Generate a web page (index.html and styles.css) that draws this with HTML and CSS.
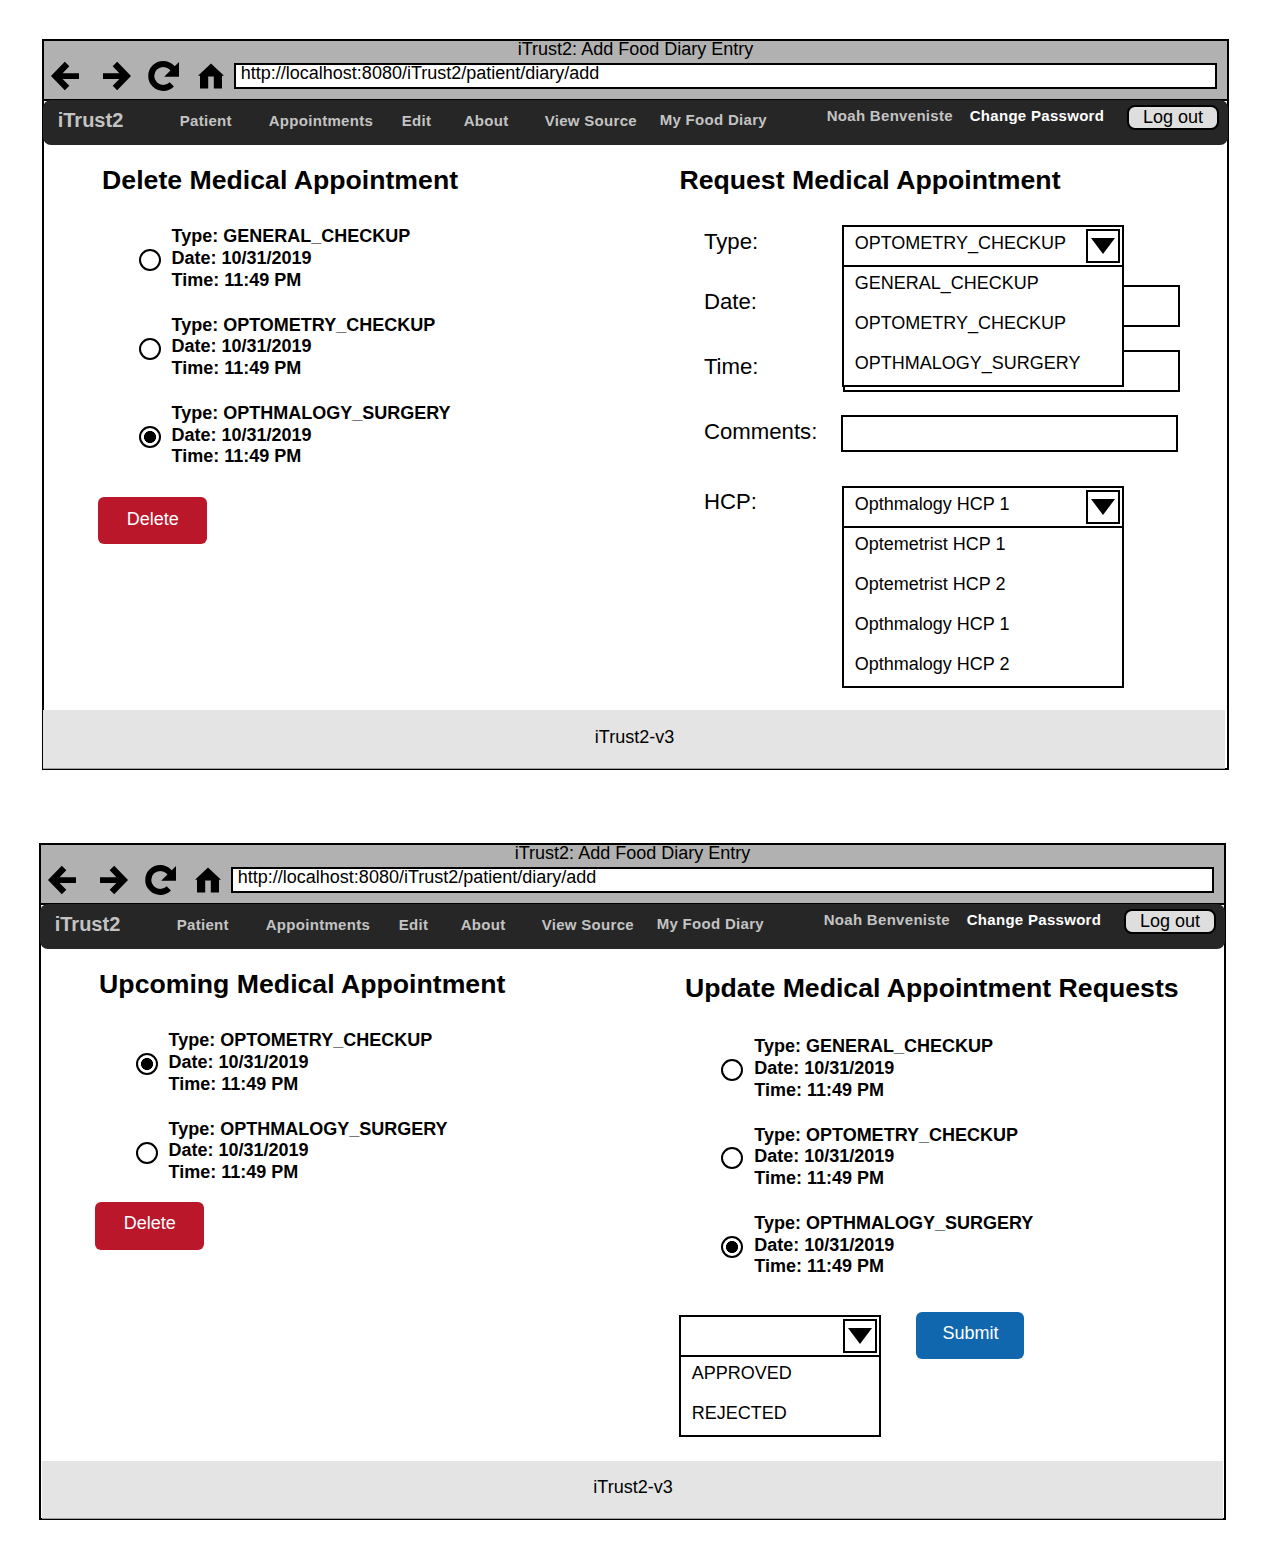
FILE: index.html
```html
<!DOCTYPE html>
<html lang="en">
<head>
<meta charset="utf-8">
<title>iTrust2: Add Food Diary Entry</title>
<link rel="stylesheet" href="styles.css">
</head>
<body>
<svg class="sprite" aria-hidden="true">
  <symbol id="i-back" viewBox="0 0 32 32"><path d="M2 16 15.8 1.8 20.3 6.3 13.6 13.2H30V19H13.6L20.3 25.7 15.8 30.2Z"/></symbol>
  <symbol id="i-forward" viewBox="0 0 32 32"><path d="M30 16 16.2 1.8 11.7 6.3 18.4 13.2H2V19H18.4L11.7 25.7 16.2 30.2Z"/></symbol>
  <symbol id="i-reload" viewBox="0 0 32 32"><path d="M23.8 24.3A12 12 0 1 1 23.8 7.5L26 10" fill="none" stroke="#000" stroke-width="6"/><path d="M31 2V16.7H16.2Z"/></symbol>
  <symbol id="i-home" viewBox="0 0 32 32"><path d="M16 3.4 29 15.7H27V28.6H18.8V16.4H13.2V28.6H5V15.7H3Z"/></symbol>
  <symbol id="i-caret" viewBox="0 0 24 16"><path d="M0 0H24L12 16Z"/></symbol>
</svg>

<section class="window window-request">
  <header class="chrome">
    <div class="chrome-title">iTrust2: Add Food Diary Entry</div>
    <div class="toolbar">
      <svg class="tool"><use href="#i-back"/></svg>
      <svg class="tool tool-forward"><use href="#i-forward"/></svg>
      <svg class="tool"><use href="#i-reload"/></svg>
      <svg class="tool"><use href="#i-home"/></svg>
      <div class="url">http://localhost:8080/iTrust2/patient/diary/add</div>
    </div>
  </header>
  <nav class="nav">
    <span class="brand">iTrust2</span>
    <span>Patient</span>
    <span>Appointments</span>
    <span>Edit</span>
    <span>About</span>
    <span>View Source</span>
    <span class="nav-diary">My Food Diary</span>
    <span class="nav-user">Noah Benveniste</span>
    <span class="nav-user nav-password">Change Password</span>
    <button class="logout">Log out</button>
  </nav>
  <main class="content">
    <div class="col-left">
      <h2>Delete Medical Appointment</h2>
      <div class="appointments">
        <div class="appointment"><i class="radio"></i><p>Type: GENERAL_CHECKUP<br>Date: 10/31/2019<br>Time: 11:49 PM</p></div>
        <div class="appointment"><i class="radio"></i><p>Type: OPTOMETRY_CHECKUP<br>Date: 10/31/2019<br>Time: 11:49 PM</p></div>
        <div class="appointment"><i class="radio checked"></i><p>Type: OPTHMALOGY_SURGERY<br>Date: 10/31/2019<br>Time: 11:49 PM</p></div>
      </div>
      <button class="btn btn-delete">Delete</button>
    </div>
    <div class="col-right">
      <h2>Request Medical Appointment</h2>
      <div class="form">
        <label>Type:</label>
        <div class="select select-over">
          <div class="select-head"><span>OPTOMETRY_CHECKUP</span><b class="arrow"><svg><use href="#i-caret"/></svg></b></div>
          <div class="option">GENERAL_CHECKUP</div>
          <div class="option">OPTOMETRY_CHECKUP</div>
          <div class="option">OPTHMALOGY_SURGERY</div>
        </div>
        <label>Date:</label>
        <div class="input"></div>
        <label>Time:</label>
        <div class="input"></div>
        <label>Comments:</label>
        <div class="input input-comments"></div>
        <label>HCP:</label>
        <div class="select">
          <div class="select-head"><span>Opthmalogy HCP 1</span><b class="arrow"><svg><use href="#i-caret"/></svg></b></div>
          <div class="option">Optemetrist HCP 1</div>
          <div class="option">Optemetrist HCP 2</div>
          <div class="option">Opthmalogy HCP 1</div>
          <div class="option">Opthmalogy HCP 2</div>
        </div>
      </div>
    </div>
  </main>
  <footer class="footer">iTrust2-v3</footer>
</section>

<section class="window window-update">
  <header class="chrome">
    <div class="chrome-title">iTrust2: Add Food Diary Entry</div>
    <div class="toolbar">
      <svg class="tool"><use href="#i-back"/></svg>
      <svg class="tool tool-forward"><use href="#i-forward"/></svg>
      <svg class="tool"><use href="#i-reload"/></svg>
      <svg class="tool"><use href="#i-home"/></svg>
      <div class="url">http://localhost:8080/iTrust2/patient/diary/add</div>
    </div>
  </header>
  <nav class="nav">
    <span class="brand">iTrust2</span>
    <span>Patient</span>
    <span>Appointments</span>
    <span>Edit</span>
    <span>About</span>
    <span>View Source</span>
    <span class="nav-diary">My Food Diary</span>
    <span class="nav-user">Noah Benveniste</span>
    <span class="nav-user nav-password">Change Password</span>
    <button class="logout">Log out</button>
  </nav>
  <main class="content">
    <div class="col-left">
      <h2>Upcoming Medical Appointment</h2>
      <div class="appointments">
        <div class="appointment"><i class="radio checked"></i><p>Type: OPTOMETRY_CHECKUP<br>Date: 10/31/2019<br>Time: 11:49 PM</p></div>
        <div class="appointment"><i class="radio"></i><p>Type: OPTHMALOGY_SURGERY<br>Date: 10/31/2019<br>Time: 11:49 PM</p></div>
      </div>
      <button class="btn btn-delete">Delete</button>
    </div>
    <div class="col-right">
      <h2>Update Medical Appointment Requests</h2>
      <div class="appointments">
        <div class="appointment"><i class="radio"></i><p>Type: GENERAL_CHECKUP<br>Date: 10/31/2019<br>Time: 11:49 PM</p></div>
        <div class="appointment"><i class="radio"></i><p>Type: OPTOMETRY_CHECKUP<br>Date: 10/31/2019<br>Time: 11:49 PM</p></div>
        <div class="appointment"><i class="radio checked"></i><p>Type: OPTHMALOGY_SURGERY<br>Date: 10/31/2019<br>Time: 11:49 PM</p></div>
      </div>
      <div class="actions">
        <div class="select select-status">
          <div class="select-head"><span></span><b class="arrow"><svg><use href="#i-caret"/></svg></b></div>
          <div class="option">APPROVED</div>
          <div class="option">REJECTED</div>
        </div>
        <button class="btn btn-submit">Submit</button>
      </div>
    </div>
  </main>
  <footer class="footer">iTrust2-v3</footer>
</section>
</body>
</html>
```
FILE: styles.css
```css
* { box-sizing: border-box; }

body {
  margin: 0;
  padding: 39px 0 40px;
  width: 1268px;
  height: 1560px;
  background: #fff;
  color: #000;
  font: 18px/18px "Liberation Sans", Arial, sans-serif;
}

.sprite { display: none; }

.window {
  display: flex;
  flex-direction: column;
  width: 1187px;
  border: 2px solid #000;
}
.window-request { height: 731px; margin-left: 42px; }
.window-update { height: 677px; margin: 73px 0 0 39px; }

/* Browser chrome */
.chrome {
  flex: none;
  height: 60px;
  background: #b1b1b1;
  border-bottom: 2px solid #000;
}
.chrome-title { height: 18px; line-height: 16px; text-align: center; }
.toolbar {
  display: flex;
  align-items: flex-start;
  gap: 15px;
  padding: 1px 10px 0 5px;
}
.tool { flex: none; width: 32px; height: 32px; }
.tool-forward { margin-left: 5px; }
.url {
  flex: 1;
  height: 26px;
  margin: 3px 0 0 -8px;
  padding-left: 4.8px;
  border: 2px solid #000;
  background: #fff;
  line-height: 16px;
}

/* Site navigation */
.nav {
  position: relative;
  flex: none;
  display: grid;
  grid-template-columns: 122px 89px 133px 62px 81px 115px 167px 143px 157.3px 92px;
  align-items: start;
  height: 45px;
  margin: -1px -1px 0;
  padding-left: 14.7px;
  border-radius: 8px;
  background: #262626;
  color: #c3c3c3;
  font-weight: bold;
  font-size: 15px;
  letter-spacing: 0.3px;
  white-space: nowrap;
}
.nav span { margin-top: 12px; }
.nav .brand { margin-top: 11px; font-size: 20px; letter-spacing: 0; }
.nav .nav-diary { margin-top: 11px; }
.nav .nav-user { margin-top: 7px; }
.nav .nav-password { color: #fff; }
.logout {
  width: 92px;
  height: 25px;
  margin: 5px 0 0;
  padding: 0 0 2px;
  border: 2px solid #000;
  border-radius: 8px;
  background: #dedede;
  color: #000;
  font: 18px/18px "Liberation Sans", Arial, sans-serif;
}

/* Page content */
.content { display: flex; flex: 1; padding-top: 20px; min-height: 0; }
.col-left { width: 634.8px; padding-left: 57.5px; flex: none; }
.col-right { flex: 1; min-width: 0; }
.window-update .col-left { width: 643.3px; }
.window-update .col-right { padding-top: 4.4px; }

h2 {
  margin: 0 0 30.7px;
  padding-left: 0.6px;
  font-size: 26.67px;
  line-height: 30px;
  font-weight: bold;
  white-space: nowrap;
}
.window-request .col-right h2 { margin-bottom: 30px; }
.window-update .col-right h2 { margin-bottom: 32.2px; }

.appointments {
  display: flex;
  flex-direction: column;
  gap: 23.5px;
  margin-left: 37.2px;
}
.appointment { display: flex; gap: 10.8px; height: 64.8px; }
.appointment p { margin: 0.8px 0 0; font-weight: bold; line-height: 21.6px; }
.radio {
  flex: none;
  width: 22px;
  height: 22px;
  margin-top: 23.6px;
  border: 2px solid #000;
  border-radius: 50%;
}
.radio.checked { background: radial-gradient(circle, #000 5.7px, #fff 6.3px); }

.btn {
  display: block;
  border: 0;
  border-radius: 6px;
  padding: 0 0 4px 1px;
  color: #fff;
  font: 18px/20px "Liberation Sans", Arial, sans-serif;
}
.btn-delete {
  width: 108.6px;
  height: 47.4px;
  margin: 30px 0 0 -3.5px;
  background: #ba182a;
}
.window-update .btn-delete { margin-top: 19.4px; padding-bottom: 5px; }
.btn-submit { width: 108px; height: 47px; background: #1167ae; }

/* Request form */
.form {
  display: grid;
  grid-template-columns: 138.5px 282px;
  grid-template-rows: 60px 65px 65px 71px 202px;
  align-items: start;
  margin-left: 24.7px;
}
.form label { padding-left: 0.4px; font-size: 22.2px; line-height: 34px; }
.form label:last-of-type { line-height: 32px; }
.input { width: 337px; height: 42px; margin-left: 1px; border: 2px solid #000; }
.input-comments { height: 37px; margin-left: -1px; }

.select { border: 2px solid #000; background: #fff; }
.select-over { position: relative; z-index: 1; }
.select-head {
  display: flex;
  justify-content: space-between;
  height: 40px;
  padding: 2px 2px 0 10.7px;
  border-bottom: 2px solid #000;
}
.select-head span { padding-top: 5px; }
.arrow {
  display: flex;
  align-items: center;
  justify-content: center;
  width: 34px;
  height: 34px;
  border: 2px solid #000;
}
.arrow svg { width: 24px; height: 16px; }
.option { height: 40px; padding: 7px 0 0 10.7px; }
.option:last-child { height: 38px; }

.actions {
  display: flex;
  align-items: flex-start;
  gap: 35px;
  margin: 34.8px 0 0 -5.3px;
}
.select-status { width: 202px; margin-top: 3px; }

.footer {
  flex: none;
  height: 59px;
  margin: 0 2px -1px -1px;
  padding-left: 1px;
  border-bottom: 1px solid #a0a0a0;
  background: #e4e4e4;
  text-align: center;
  line-height: 54px;
}
.window-update .footer { height: 58px; margin: 0 1px -1px; line-height: 52px; }
```
